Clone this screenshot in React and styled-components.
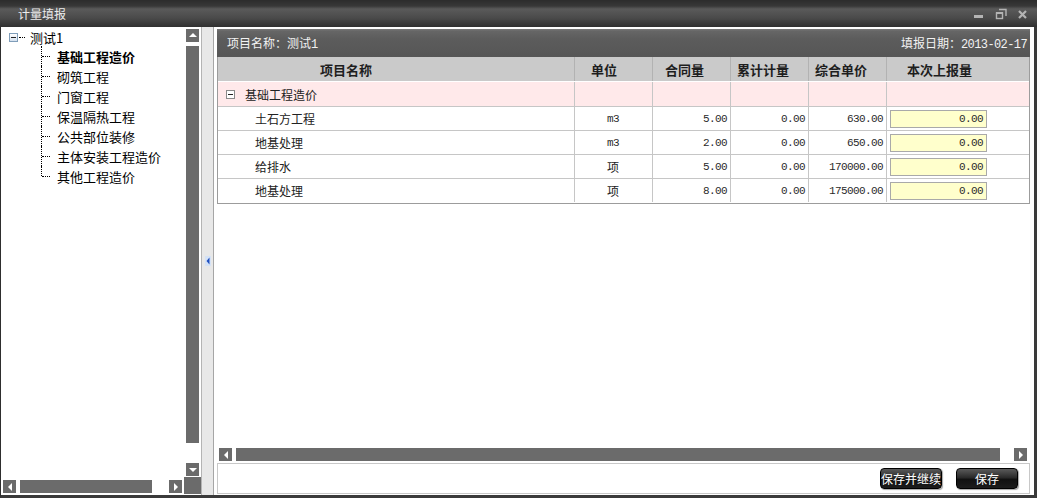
import React from "react";
import styled, { createGlobalStyle, css } from "styled-components";

const GlobalStyle = createGlobalStyle`
  html, body {
    margin: 0;
    padding: 0;
    background: #ffffff;
  }
  body {
    font-family: "Noto Sans CJK SC", "Liberation Sans", sans-serif;
  }
`;

const mono = css`
  font-family: "Liberation Mono", "Noto Sans CJK SC", monospace;
  font-size: 11px;
  letter-spacing: -0.6px;
`;

const Window = styled.div`
  width: 1037px;
  height: 498px;
  display: flex;
  flex-direction: column;
  background: #3a3a3a;
  overflow: hidden;
`;

const TitleBar = styled.div`
  height: 27px;
  flex: none;
  display: flex;
  align-items: center;
  padding: 0 8px 0 18px;
  box-sizing: border-box;
  background: linear-gradient(
    #2c2c2c 0px,
    #383838 6px,
    #5a5a5a 9px,
    #4a4a4a 18px,
    #303030 27px
  );
  color: #ececec;
  font-size: 12px;
`;

const Controls = styled.div`
  margin-left: auto;
  display: flex;
  align-items: center;
  gap: 10px;
`;

const Body = styled.div`
  flex: 1;
  display: flex;
  min-height: 0;
  background: #ffffff;
  border-left: 1px solid #2e2e2e;
  border-right: 3px solid #3a3a3a;
  border-bottom: 3px solid #3a3a3a;
`;

/* ---------- left tree pane ---------- */

const LeftPane = styled.div`
  width: 200px;
  flex: none;
  display: flex;
  flex-direction: column;
`;

const TreeRow = styled.div`
  flex: 1;
  display: flex;
  min-height: 0;
`;

const Tree = styled.div`
  flex: 1;
  padding: 0 0 0 8px;
  font-size: 13px;
  color: #000000;
`;

const RootNode = styled.div`
  height: 20px;
  display: flex;
  align-items: center;
`;

const ExpandBox = styled.span`
  width: 9px;
  height: 9px;
  box-sizing: border-box;
  flex: none;
  display: flex;
  align-items: center;
  justify-content: center;
  border: 1px solid ${({ $tone }) => ($tone === "gray" ? "#8a8a8a" : "#7f9db9")};
  background: ${({ $tone }) =>
    $tone === "gray" ? "#ffffff" : "linear-gradient(#ffffff, #d4e0ee)"};

  &::after {
    content: "";
    width: 5px;
    height: 1px;
    background: #222222;
  }
`;

const Stub = styled.span`
  width: 6px;
  margin: 1px 5px 0 1px;
  border-top: 1px dotted #000000;
`;

const ChildList = styled.div`
  margin: -1px 0 0 32px;
`;

const ChildNode = styled.div`
  position: relative;
  height: 20px;
  display: flex;
  align-items: center;
  padding-left: 16px;
  font-weight: ${({ $active }) => ($active ? 700 : 400)};

  &::before {
    content: "";
    position: absolute;
    left: 0;
    top: 0;
    height: ${({ $last }) => ($last ? "10px" : "20px")};
    border-left: 1px dotted #000000;
  }

  &::after {
    content: "";
    position: absolute;
    left: 1px;
    top: 10px;
    width: 8px;
    border-top: 1px dotted #000000;
  }
`;

const VScroll = styled.div`
  width: 13px;
  flex: none;
  margin: 2px 2px 1px 0;
  display: flex;
  flex-direction: column;
`;

const Thumb = styled.div`
  background: #6b6b6b;
  ${({ $vertical }) =>
    $vertical
      ? css`
          flex: 1;
          margin: 4px 0 20px;
        `
      : css`
          height: 13px;
        `}
`;

const ArrowBtn = styled.div`
  width: 13px;
  height: 13px;
  flex: none;
  background: #6b6b6b;
  display: flex;
  align-items: center;
  justify-content: center;

  &::after {
    content: "";
    width: 0;
    height: 0;
    ${({ $dir }) =>
      $dir === "up"
        ? css`
            border-left: 4px solid transparent;
            border-right: 4px solid transparent;
            border-bottom: 4px solid #ffffff;
            margin-top: -2px;
          `
        : $dir === "down"
        ? css`
            border-left: 4px solid transparent;
            border-right: 4px solid transparent;
            border-top: 4px solid #ffffff;
          `
        : $dir === "left"
        ? css`
            border-top: 4px solid transparent;
            border-bottom: 4px solid transparent;
            border-right: 4px solid #ffffff;
          `
        : css`
            border-top: 4px solid transparent;
            border-bottom: 4px solid transparent;
            border-left: 4px solid #ffffff;
          `}
  }
`;

const HScrollLeft = styled.div`
  height: 18px;
  flex: none;
  display: flex;
  align-items: flex-start;
  padding-left: 2px;

  & > :nth-child(1) {
    margin-top: 3px;
  }
`;

const LeftHThumb = styled(Thumb)`
  width: 132px;
  margin: 3px 17px 0 4px;
`;

const RightArrow = styled(ArrowBtn)`
  margin-top: 3px;
`;

const Corner = styled.div`
  width: 17px;
  height: 17px;
  margin-left: 2px;
  background: #6b6b6b;
`;

/* ---------- splitter ---------- */

const Splitter = styled.div`
  width: 13px;
  flex: none;
  box-sizing: border-box;
  background: #e8e8e8;
  border-left: 1px solid #b4b4b4;
  border-right: 1px solid #a6a6a6;
  display: flex;
  align-items: center;
  justify-content: center;
`;

/* ---------- right grid pane ---------- */

const RightPane = styled.div`
  flex: 1;
  min-width: 0;
  display: flex;
  flex-direction: column;
  padding: 2px 4px 1px 3px;
`;

const Grid = styled.div`
  border: 1px solid #9c9c9c;
  border-top: none;
  flex: none;
`;

const GridCaption = styled.div`
  height: 28px;
  display: flex;
  align-items: center;
  justify-content: space-between;
  padding: 0 3px 0 10px;
  margin: 0 -1px;
  background: linear-gradient(#7c7c7c 0px, #666666 2px, #5c5c5c 10px, #565656 100%);
  color: #f2f2f2;
  font-size: 12px;
`;

const Mono = styled.span`
  ${mono};
  font-size: 12px;
`;

const Row = styled.div`
  display: grid;
  grid-template-columns: 357px 78px 78px 78px 78px 142px;
  height: ${({ $h }) => $h}px;
  box-sizing: border-box;
  background: ${({ $bg }) => $bg};
  border-bottom: 1px solid ${({ $line }) => $line};
`;

const HeadCell = styled.div`
  box-sizing: border-box;
  display: flex;
  align-items: center;
  padding-left: ${({ $pad }) => $pad}px;
  border-right: 1px solid #b2b2b2;
  font-size: 13px;
  font-weight: 700;
  color: #1e1e1e;

  &:last-child {
    border-right: none;
  }
`;

const Cell = styled.div`
  box-sizing: border-box;
  display: flex;
  align-items: center;
  gap: 10px;
  justify-content: ${({ $right }) => ($right ? "flex-end" : "flex-start")};
  padding: 0 ${({ $right }) => ($right ? 3 : 0)}px 0 ${({ $pad = 0 }) => $pad}px;
  border-right: 1px solid #c6c6c6;
  font-size: 12px;
  color: #222222;

  &:last-child {
    border-right: none;
  }
`;

const Num = styled.span`
  ${mono};
  color: #2a2a2a;
  -webkit-font-smoothing: antialiased;
`;

const QtyInput = styled.div`
  width: 97px;
  height: 18px;
  box-sizing: border-box;
  border: 1px solid #a9a9a9;
  background: #ffffcc;
  display: flex;
  align-items: center;
  justify-content: flex-end;
  padding-right: 3px;
`;

const Spacer = styled.div`
  flex: 1;
`;

const HScrollRight = styled.div`
  height: 13px;
  flex: none;
  display: flex;
  margin: 0 3px 2px 2px;
`;

const RightHThumb = styled(Thumb)`
  width: 764px;
  margin-left: 4px;
`;

const PushRight = styled(ArrowBtn)`
  margin-left: auto;
`;

const Footer = styled.div`
  height: 31px;
  flex: none;
  box-sizing: border-box;
  border: 1px solid #c8c8c8;
  display: flex;
  align-items: center;
  justify-content: flex-end;
  gap: 14px;
  padding: 0 11px 0 0;
`;

const DarkButton = styled.button`
  width: 62px;
  height: 21px;
  padding: 0;
  border: 1px solid #000000;
  border-radius: 4px;
  background: linear-gradient(#5a5a5a 0%, #2a2a2a 45%, #111111 55%, #1c1c1c 100%);
  box-shadow: 1px 1px 1px rgba(0, 0, 0, 0.35);
  color: #ffffff;
  font-family: "Noto Sans CJK SC", sans-serif;
  font-size: 12px;
  line-height: 19px;
  white-space: nowrap;
  cursor: pointer;
`;

/* ---------- icons ---------- */

const MinIcon = () => (
  <svg width="12" height="12" viewBox="0 0 12 12">
    <rect x="1" y="7" width="9" height="3" fill="#b4b4b4" />
  </svg>
);

const RestoreIcon = () => (
  <svg width="12" height="12" viewBox="0 0 12 12">
    <path d="M4 1.5h7v6.5" fill="none" stroke="#b4b4b4" strokeWidth="1.4" />
    <rect x="1.5" y="5" width="6" height="5.5" fill="none" stroke="#b4b4b4" strokeWidth="1.4" />
    <rect x="1" y="4" width="7" height="2" fill="#b4b4b4" />
  </svg>
);

const CloseIcon = () => (
  <svg width="12" height="12" viewBox="0 0 12 12">
    <path d="M2 3l7 7M9 3l-7 7" stroke="#b4b4b4" strokeWidth="2.2" />
  </svg>
);

const CollapseArrow = () => (
  <svg width="6" height="10" viewBox="0 0 6 10">
    <rect x="0" y="0" width="6" height="10" fill="#d4e2f6" />
    <path d="M1.5 5L4.5 1.5V8.5Z" fill="#1f4fbf" />
  </svg>
);

const treeItems = [
  "基础工程造价",
  "砌筑工程",
  "门窗工程",
  "保温隔热工程",
  "公共部位装修",
  "主体安装工程造价",
  "其他工程造价",
];

const rows = [
  { name: "土石方工程", unit: "m3", qty: "5.00", acc: "0.00", price: "630.00", now: "0.00" },
  { name: "地基处理", unit: "m3", qty: "2.00", acc: "0.00", price: "650.00", now: "0.00" },
  { name: "给排水", unit: "项", qty: "5.00", acc: "0.00", price: "170000.00", now: "0.00" },
  { name: "地基处理", unit: "项", qty: "8.00", acc: "0.00", price: "175000.00", now: "0.00" },
];

const headers = [
  { label: "项目名称", pad: 102 },
  { label: "单位", pad: 16 },
  { label: "合同量", pad: 12 },
  { label: "累计计量", pad: 6 },
  { label: "综合单价", pad: 6 },
  { label: "本次上报量", pad: 20 },
];

export default function App() {
  return (
    <>
      <GlobalStyle />
      <Window>
        <TitleBar>
          计量填报
          <Controls>
            <MinIcon />
            <RestoreIcon />
            <CloseIcon />
          </Controls>
        </TitleBar>
        <Body>
          <LeftPane>
            <TreeRow>
              <Tree>
                <RootNode>
                  <ExpandBox />
                  <Stub />
                  测试1
                </RootNode>
                <ChildList>
                  {treeItems.map((item, i) => (
                    <ChildNode
                      key={item}
                      $active={i === 0}
                      $last={i === treeItems.length - 1}
                    >
                      {item}
                    </ChildNode>
                  ))}
                </ChildList>
              </Tree>
              <VScroll>
                <ArrowBtn $dir="up" />
                <Thumb $vertical />
                <ArrowBtn $dir="down" />
              </VScroll>
            </TreeRow>
            <HScrollLeft>
              <ArrowBtn $dir="left" />
              <LeftHThumb />
              <RightArrow $dir="right" />
              <Corner />
            </HScrollLeft>
          </LeftPane>

          <Splitter>
            <CollapseArrow />
          </Splitter>

          <RightPane>
            <Grid>
              <GridCaption>
                <span>
                  项目名称：测试<Mono>1</Mono>
                </span>
                <span>
                  填报日期：<Mono>2013-02-17</Mono>
                </span>
              </GridCaption>
              <Row $h={25} $bg="#cacaca" $line="#ffffff">
                {headers.map((h) => (
                  <HeadCell key={h.label} $pad={h.pad}>
                    {h.label}
                  </HeadCell>
                ))}
              </Row>
              <Row $h={25} $bg="#ffe9ea" $line="#c6c6c6">
                <Cell $pad={8}>
                  <ExpandBox $tone="gray" />
                  基础工程造价
                </Cell>
                <Cell />
                <Cell />
                <Cell />
                <Cell />
                <Cell />
              </Row>
              {rows.map((r, i) => (
                <Row
                  key={i}
                  $h={24}
                  $bg="#ffffff"
                  $line={i === rows.length - 1 ? "transparent" : "#c6c6c6"}
                >
                  <Cell $pad={37}>{r.name}</Cell>
                  <Cell $pad={32}>
                    {r.unit === "m3" ? <Num>{r.unit}</Num> : r.unit}
                  </Cell>
                  <Cell $right>
                    <Num>{r.qty}</Num>
                  </Cell>
                  <Cell $right>
                    <Num>{r.acc}</Num>
                  </Cell>
                  <Cell $right>
                    <Num>{r.price}</Num>
                  </Cell>
                  <Cell $pad={3}>
                    <QtyInput>
                      <Num>{r.now}</Num>
                    </QtyInput>
                  </Cell>
                </Row>
              ))}
            </Grid>
            <Spacer />
            <HScrollRight>
              <ArrowBtn $dir="left" />
              <RightHThumb />
              <PushRight $dir="right" />
            </HScrollRight>
            <Footer>
              <DarkButton>保存并继续</DarkButton>
              <DarkButton>保存</DarkButton>
            </Footer>
          </RightPane>
        </Body>
      </Window>
    </>
  );
}
